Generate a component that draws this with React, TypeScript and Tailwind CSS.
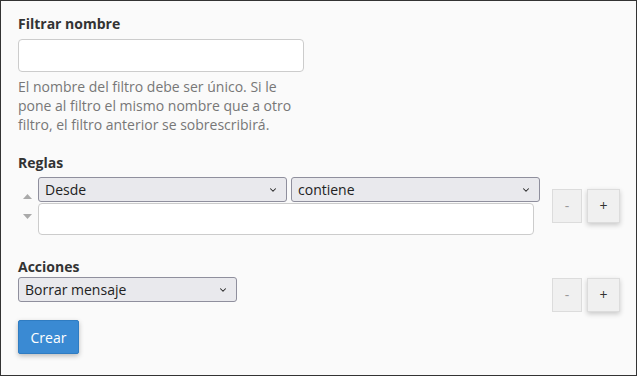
import { ChevronDown } from "lucide-react";

function Select({ value, className }: { value: string; className: string }) {
  return (
    <div
      className={`relative flex items-center h-[25px] rounded-[3px] border border-[#8f8f9d] bg-[#e9e9ed] pl-[6px] text-[14px] text-[#222] ${className}`}
    >
      <span className="leading-[20px]">{value}</span>
      <ChevronDown className="absolute right-[8px] top-[7px] w-[10px] h-[10px] text-[#222]" strokeWidth={2.5} />
    </div>
  );
}

function PlusMinus() {
  return (
    <div className="flex gap-[5px]">
      <button className="w-[30px] h-[34px] border border-[#dcdcdc] bg-[#f0f0f0] text-[14px] text-[#999] leading-none">
        -
      </button>
      <button className="w-[33px] h-[34px] border border-[#dcdcdc] bg-[#f0f0f0] text-[14px] text-[#333] leading-none shadow-[0_2px_5px_rgba(0,0,0,0.2)]">
        +
      </button>
    </div>
  );
}

export default function App() {
  return (
    <div
      className="w-[637px] h-[376px] border border-[#333] bg-[#fafafa] pt-[13px] pl-[17px] pr-[16px] text-[#333]"
      style={{ fontFamily: '"Open Sans", "Noto Sans", sans-serif' }}
    >
      {/* Filter name */}
      <label className="block text-[14px] font-bold leading-[20px]">Filtrar nombre</label>
      <input className="mt-[5px] block w-[286px] h-[33px] rounded-[4px] border border-[#cccccc] bg-white" />
      <p className="mt-[5px] w-[290px] text-[14px] leading-[19px] text-[#777]">
        El nombre del filtro debe ser único. Si le pone al filtro el mismo nombre que a otro filtro, el filtro anterior se sobrescribirá.
      </p>

      {/* Rules */}
      <div className="mt-[19px] text-[14px] font-bold leading-[20px]">Reglas</div>
      <div className="mt-[4px] flex items-center">
        <div className="flex">
          <div className="w-[20px] flex flex-col items-center justify-center gap-[15px] pr-[2px]">
            <svg width="9" height="5" viewBox="0 0 9 5">
              <path d="M0 5 L4.5 0 L9 5 Z" fill="#aaaaaa" />
            </svg>
            <svg width="9" height="5" viewBox="0 0 9 5">
              <path d="M0 0 L4.5 5 L9 0 Z" fill="#aaaaaa" />
            </svg>
          </div>
          <div className="flex flex-col">
            <div className="flex gap-[4px]">
              <Select value="Desde" className="w-[249px]" />
              <Select value="contiene" className="w-[249px]" />
            </div>
            <input className="mt-px block w-[496px] h-[32px] rounded-[4px] border border-[#cccccc] bg-white" />
          </div>
        </div>
        <div className="ml-[12px]">
          <PlusMinus />
        </div>
      </div>

      {/* Actions */}
      <div className="mt-[22px] text-[14px] font-bold leading-[20px]">Acciones</div>
      <div className="flex items-start">
        <div className="w-[522px]">
          <Select value="Borrar mensaje" className="w-[219px]" />
        </div>
        <div className="ml-[12px] mt-px">
          <PlusMinus />
        </div>
      </div>

      <button className="mt-[8px] w-[61px] h-[34px] rounded-[2px] bg-[#3a8ad3] border border-[#2f7cc2] text-white text-[14px] shadow-[0_2px_5px_rgba(0,0,0,0.25)]">
        Crear
      </button>
    </div>
  );
}
